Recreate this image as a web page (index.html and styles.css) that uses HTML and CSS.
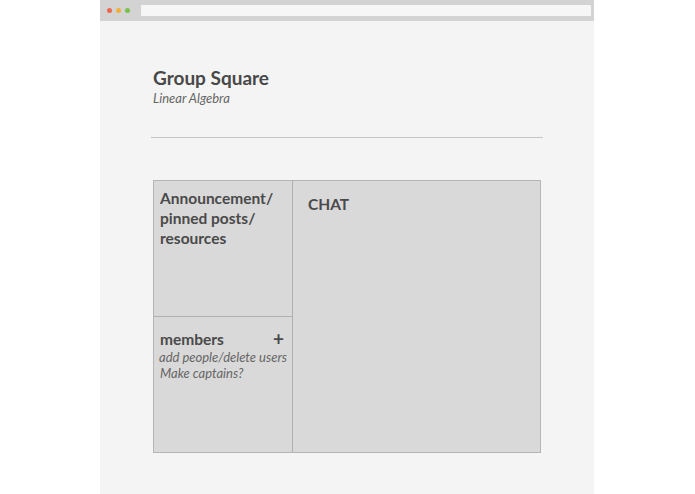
FILE: index.html
```html
<!DOCTYPE html>
<html lang="en">
<head>
  <meta charset="UTF-8">
  <title>Group Square</title>
  <link rel="stylesheet" href="styles.css">
</head>
<body>
  <div class="janela">
    <div class="barra-titulo">
      <span class="ponto vermelho"></span>
      <span class="ponto amarelo"></span>
      <span class="ponto verde"></span>
      <div class="endereco"></div>
    </div>
    <main class="conteudo">
      <header class="cabecalho">
        <h1>Group Square</h1>
        <p>Linear Algebra</p>
      </header>
      <hr class="divisor">
      <section class="grade">
        <div class="coluna">
          <div class="painel avisos">
            <h2>Announcement/<br>pinned posts/<br>resources</h2>
          </div>
          <div class="painel membros">
            <div class="membros-topo">
              <h2>members</h2>
              <span class="mais">+</span>
            </div>
            <p class="nota">add people/delete users</p>
            <p class="nota recuo">Make captains?</p>
          </div>
        </div>
        <div class="painel chat">
          <h2>CHAT</h2>
        </div>
      </section>
    </main>
  </div>
</body>
</html>
```

FILE: styles.css
```css
* { box-sizing: border-box; margin: 0; padding: 0; }
body { background: #fff; font-family: Lato, "Open Sans", sans-serif; color: #4a4a4a; }

.janela { width: 494px; height: 494px; margin-left: 100px; background: #f4f4f4; }

.barra-titulo { height: 21px; background: #d3d3d3; display: flex; align-items: center; padding: 0 3px 0 7px; }
.ponto { width: 5px; height: 5px; border-radius: 50%; margin-right: 4px; }
.vermelho { background: #e9694f; }
.amarelo { background: #eeb13c; }
.verde { background: #79c14b; }
.endereco { flex: 1; height: 11px; margin-left: 7px; background: #f6f6f6; border-radius: 1px; }

.conteudo { padding: 45px 51px 0 51px; }
.cabecalho { padding-left: 2px; }
.cabecalho h1 { font-size: 19px; font-weight: 700; line-height: 23px; color: #484848; }
.cabecalho p { font-size: 13px; font-style: italic; line-height: 16px; color: #666; margin-top: 1px; }
.divisor { border: none; border-top: 1px solid #c4c4c4; margin-top: 31px; }

.grade { display: flex; width: 388px; height: 273px; margin: 42px 0 0 2px; border: 1px solid #b5b5b5; background: #d9d9d9; }
.coluna { width: 139px; display: flex; flex-direction: column; border-right: 1px solid #b0b0b0; }
.painel h2 { font-size: 15.5px; font-weight: 700; line-height: 20px; color: #4a4a4a; }
.avisos { height: 136px; padding: 7px 6px; border-bottom: 1px solid #b0b0b0; }
.membros { flex: 1; padding: 12px 2px 0 5px; }
.membros-topo { display: flex; justify-content: space-between; align-items: center; padding: 0 6px 0 1px; }
.mais { font-size: 19px; font-weight: 700; line-height: 20px; color: #4a4a4a; }
.nota { font-size: 13px; font-style: italic; line-height: 16px; color: #666; white-space: nowrap; }
.recuo { padding-left: 1px; }
.chat { flex: 1; padding: 13px 15px; }
```
